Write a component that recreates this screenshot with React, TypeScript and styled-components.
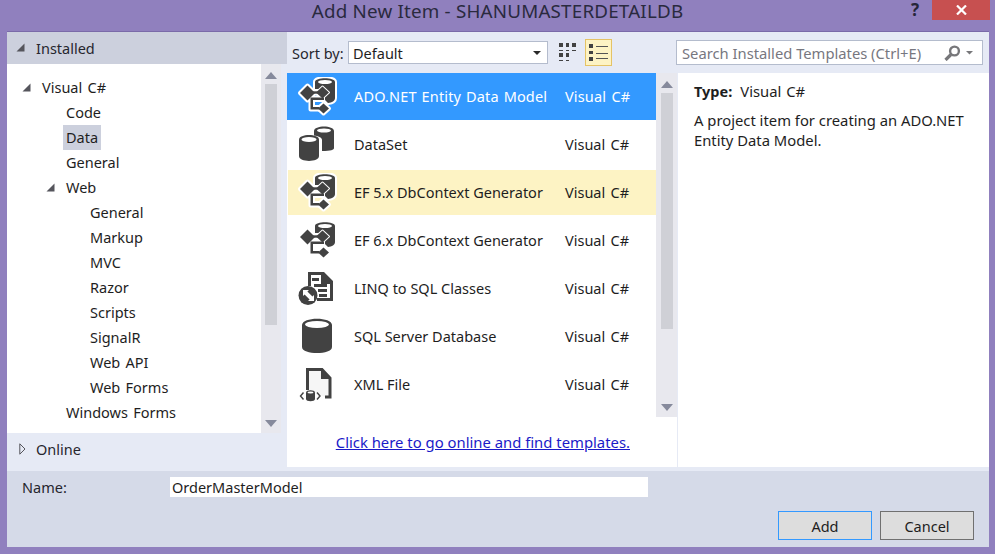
import React from "react";
import styled, { createGlobalStyle } from "styled-components";

const Global = createGlobalStyle`
  html, body { margin: 0; padding: 0; width: 995px; height: 554px; overflow: hidden; background: #9080be; }
  * { box-sizing: border-box; }
`;

const FONT = `"Noto Sans", "Open Sans", "Liberation Sans", sans-serif`;
const INK = "#1e1e1e";

const Win = styled.div`
  width: 995px; height: 554px; background: #9080be; display: flex; flex-direction: column;
  font-family: ${FONT}; font-size: 14.5px; color: ${INK}; overflow: hidden;
`;
const TitleBar = styled.header`
  height: 31px; flex: none; display: grid; grid-template-columns: 1fr auto 1fr; align-items: start;
`;
const TitleText = styled.h1`
  margin: 0; font-size: 18.8px; font-weight: 400; line-height: 23px; color: #2a2a3e; letter-spacing: 0.2px; white-space: nowrap;
`;
const Controls = styled.div`
  display: flex; justify-content: flex-end; align-items: flex-start; padding-right: 5px;
`;
const Help = styled.span`
  width: 22px; font-size: 17px; font-weight: 700; line-height: 20px; text-align: left; color: #26263a; padding-left: 1px;
`;
const Close = styled.span`
  width: 58px; height: 20px; background: #c75050; display: flex; align-items: center; justify-content: center;
`;
const Client = styled.main`
  margin: 0 6px 7px 7px; flex: 1; min-height: 0; display: flex; flex-direction: column;
  border-top: 1px solid #7a6aa8; background: #e6eaf5;
`;
const Top = styled.div`flex: 1; min-height: 0; display: grid; grid-template-columns: 280px 1fr;`;
const Left = styled.aside`display: flex; flex-direction: column; min-height: 0;`;
const SectionHead = styled.div<{ $active?: boolean }>`
  height: ${p => (p.$active ? "32px" : "38px")}; flex: none; display: flex; align-items: center;
  gap: ${p => (p.$active ? "11px" : "10px")}; padding-left: ${p => (p.$active ? "9px" : "12px")};
  padding-bottom: ${p => (p.$active ? "1px" : "6px")};
  background: ${p => (p.$active ? "#ccd0dd" : "transparent")}; color: #26262e;
`;
const TreeWrap = styled.div`flex: 1; min-height: 0; display: grid; grid-template-columns: 254px 20px 6px;`;
const Tree = styled.ul`
  list-style: none; margin: 0; padding: 11px 0 0; background: #fff; display: flex; flex-direction: column;
`;
const Node = styled.li<{ $level: number }>`
  height: 25px; flex: none; display: flex; align-items: center; padding-left: ${p => [15, 56, 80, 39][p.$level]}px; gap: 8px; line-height: 25px;
`;
const Label = styled.span<{ $selected?: boolean }>`
  padding: 0 3px; background: ${p => (p.$selected ? "#ccd0dd" : "transparent")}; color: ${INK}; word-spacing: 1.5px;
`;
const Bar = styled.div`
  background: #e8e8ee; display: flex; flex-direction: column; align-items: center; padding: 8px 0 6px;
`;
const Thumb = styled.div<{ $h: number }>`
  width: 12px; height: ${p => p.$h}px; background: #cfd0d6; margin-top: 5px;
`;
const Spacer = styled.div`flex: 1;`;
const Center = styled.section`display: flex; flex-direction: column; min-width: 0;`;
const Toolbar = styled.div`
  height: 41px; flex: none; display: grid; grid-template-columns: 1fr 313px; align-items: center;
`;
const ToolLeft = styled.div`display: flex; align-items: center; padding-left: 5px;`;
const ToolLabel = styled.span`width: 56px; color: #26262e;`;
const Select = styled.div`
  width: 200px; height: 23px; background: #fff; border: 1px solid #b4bccd; display: flex; align-items: center;
  justify-content: space-between; padding: 0 6px 0 4px; color: ${INK}; margin-right: 10px;
`;
const ViewBtn = styled.span`
  width: 27px; height: 27px; display: flex; align-items: center; justify-content: center; margin-left: 8px;
  background: #fdf3c4; border: 1px solid #e5c365;
`;
const Search = styled.div`
  width: 307px; height: 25px; background: #fff; border: 1px solid #b4bccd; display: flex; align-items: center;
  justify-content: space-between; padding: 0 5px; color: #77777f; font-size: 14.75px;
`;
const Panes = styled.div`flex: 1; min-height: 0; display: grid; grid-template-columns: 369px 21px 1px 1fr; padding-bottom: 4px;`;
const ListCol = styled.div`background: #fff; display: flex; flex-direction: column;`;
const Row = styled.div<{ $state?: "sel" | "hover" }>`
  height: 48px; flex: none; display: grid; grid-template-columns: 67px 211px 1fr; align-items: center; padding-bottom: 2px;
  background: ${p => (p.$state === "sel" ? "#3399ff" : "#fff")};
  ${p => p.$state === "hover" ? "background-image: linear-gradient(#fdf3c4, #fdf3c4); background-size: calc(100% - 1px) 45px; background-position: 1px 1px; background-repeat: no-repeat;" : ""}
  ${p => p.$state === "sel" ? "height: 47px; margin-bottom: 1px; letter-spacing: 0.15px; word-spacing: 1px; padding-bottom: 1px;" : ""}
  color: ${p => (p.$state === "sel" ? "#fff" : INK)};
`;
const IconCell = styled.span`display: flex; justify-content: flex-start; padding: 2px 0 0 10px;`;
const Lang = styled.span`word-spacing: 1.5px;`;
const LinkRow = styled.div`flex: 1; display: flex; justify-content: flex-end; align-items: flex-end; padding: 0 26px 15px 0;`;
const More = styled.a`color: #1a1ac8; text-decoration: underline; line-height: 20px; font-size: 14.85px;`;
const ListScroll = styled.div`background: #fff; display: flex; flex-direction: column;`;
const ListBar = styled(Bar)`height: 344px; flex: none;`;
const Divider = styled.div`background: #e6eaf5;`;
const Info = styled.div`background: #fff; padding: 8px 16px; line-height: 20px; font-size: 14.8px;`;
const InfoType = styled.div`margin-bottom: 9px; word-spacing: 1px;`;
const Strong = styled.b`font-weight: 700; margin-right: 8px; font-size: 14.5px;`;
const Footer = styled.footer`
  height: 76px; flex: none; background: #d5dae8; display: flex; flex-direction: column; padding: 6px 15px 7px 15px;
`;
const NameRow = styled.div`display: flex; align-items: center; height: 20px;`;
const NameLabel = styled.span`width: 148px; color: #26262e;`;
const NameInput = styled.div`
  width: 478px; height: 20px; background: #fff; padding-left: 2px; line-height: 20px; color: ${INK};
`;
const Buttons = styled.div`margin-top: auto; display: flex; justify-content: flex-end; gap: 8px;`;
const Btn = styled.button<{ $primary?: boolean }>`
  width: 94px; height: 29px; padding: 0; background: #dddddd; font: inherit; color: ${INK};
  border: 1px solid ${p => (p.$primary ? "#3399ff" : "#707070")};
`;

const Tri = ({ open }: { open?: boolean }) => open ? (
  <svg width="9" height="9" viewBox="0 0 9 9"><path d="M8.5 0.5V8.5H0.5Z" fill="#55555c" /></svg>
) : (
  <svg width="7" height="12" viewBox="0 0 7 12"><path d="M0.8 0.8L6 6L0.8 11.2Z" fill="none" stroke="#55555c" /></svg>
);
const Up = () => <svg width="12" height="7" viewBox="0 0 12 7"><path d="M6 0L12 7H0Z" fill="#868a9c" /></svg>;
const Down = () => <svg width="12" height="7" viewBox="0 0 12 7"><path d="M6 7L12 0H0Z" fill="#868a9c" /></svg>;
const Caret = () => <svg width="8" height="4" viewBox="0 0 8 4"><path d="M0 0H8L4 4Z" fill="#2a2a2a" /></svg>;

const D = "#424242";

const EntityIcon = () => {
  const cylinder = "M18 5C18 0 38 0 38 5V21C38 24 35 25.5 31 26L25 20V12H18Z";
  const pieces = (
    <>
      <path d="M3 16L10.5 8.5L18 16L10.5 23.5Z" />
      <path d="M19 15.5L25.5 9.5L32 15.5L25.5 21.5Z" />
      <path d="M21 31.5L26.5 26.5L32 31.5L26.5 36.5Z" />
      <path d="M13.5 20.5H27V23H16V30H22V32.5H13.5Z" />
    </>
  );
  return (
    <svg width="40" height="40" viewBox="0 0 40 40">
      <g fill="#fff" stroke="#fff" strokeWidth="4" strokeLinejoin="round">
        <path d={cylinder} />
        {pieces}
      </g>
      <path d={cylinder} fill={D} />
      <g fill="#fff" stroke="#fff" strokeWidth="2" strokeLinejoin="round">{pieces}</g>
      <g fill={D}>{pieces}</g>
      <path d="M16 15.5H21" stroke={D} strokeWidth="2.4" />
      <ellipse cx="28" cy="5" rx="7" ry="2" fill="#fff" />
    </svg>
  );
};
const DataSetIcon = () => (
  <svg width="40" height="40" viewBox="0 0 40 40">
    <path d="M17 6C17 0 37 0 37 6V23C37 25 34 26 25 26V15C25 12.5 21 11 17 10.5Z" fill={D} />
    <ellipse cx="27" cy="5.5" rx="7" ry="2" fill="#fff" />
    <path d="M2 14.5C2 8.5 22 8.5 22 14.5V31C22 37.5 2 37.5 2 31Z" fill={D} />
    <ellipse cx="12" cy="14.5" rx="7.5" ry="2.4" fill="#fff" />
  </svg>
);
const LinqIcon = () => (
  <svg width="40" height="40" viewBox="0 0 40 40">
    <path d="M11 3H27L36 12V32H20V29H33V15H24V6H14V17H11Z" fill={D} />
    <path d="M15 9H22V12H15ZM17 15H30V18H17ZM21 20H30V23H21ZM22 25H30V28H22Z" fill={D} />
    <circle cx="11" cy="26.5" r="9.5" fill={D} />
    <path d="M6 21H12L10.4 22.6L15.4 27.6L17 26V32H11L12.6 30.4L7.6 25.4L6 27Z" fill="#fff" />
  </svg>
);
const SqlIcon = () => (
  <svg width="40" height="40" viewBox="0 0 40 40">
    <path d="M5 8C5 -0.5 35 -0.5 35 8V30C35 38 5 38 5 30Z" fill={D} />
    <ellipse cx="20" cy="7.5" rx="12" ry="3.5" fill="#fff" />
  </svg>
);
const XmlIcon = () => (
  <svg width="40" height="40" viewBox="0 0 40 40">
    <path d="M10.5 25V4.5H25L33 13V32H28" fill="#f6f6f6" stroke={D} strokeWidth="3" />
    <path d="M24 3V14H34Z" fill={D} />
    <path d="M9 27.5C9 24.5 18 24.5 18 27.5V34C18 37 9 37 9 34Z" fill={D} />
    <ellipse cx="13.5" cy="27.5" rx="3" ry="1" fill="#fff" />
    <path d="M6.5 27.5L3.5 31L6.5 34.5M20 27.5L23 31L20 34.5" fill="none" stroke={D} strokeWidth="1.4" />
  </svg>
);
const GridIcon = () => (
  <svg width="19" height="20" viewBox="0 0 19 20" fill="#424242">
    <path d="M1 0h4v4h-4zM8 0h3v4h-3zM14 0h4v4h-4zM1 7h4v1h-4zM8 7h3v1h-3zM14 7h4v1h-4zM1 10h4v4h-4zM8 10h3v4h-3zM1 17h4v1h-4zM8 17h3v1h-3z" />
  </svg>
);
const ListIcon = () => (
  <svg width="19" height="18" viewBox="0 0 19 18">
    <path d="M0 0h4v4h-4zM0 7h4v3h-4zM0 13h4v4h-4z" fill="#424242" />
    <path d="M7 2h12v1h-12zM7 9h12v1h-12zM7 14h12v1h-12z" fill="#555" />
  </svg>
);
const Glass = () => (
  <svg width="34" height="16" viewBox="0 0 34 16">
    <circle cx="11.5" cy="6" r="4.4" fill="none" stroke="#77777a" strokeWidth="2.4" />
    <path d="M8 9.5L2.5 15" stroke="#77777a" strokeWidth="3.2" />
    <path d="M23 6H30L26.5 9.5Z" fill="#77777a" />
  </svg>
);
const CloseX = () => (
  <svg width="11" height="10" viewBox="0 0 11 10"><path d="M1 0.5L10 9.5M10 0.5L1 9.5" stroke="#fff" strokeWidth="2.2" /></svg>
);

const web = ["General", "Markup", "MVC", "Razor", "Scripts", "SignalR", "Web API", "Web Forms"];
const items: { name: string; icon: React.ReactNode; state?: "sel" | "hover" }[] = [
  { name: "ADO.NET Entity Data Model", icon: <EntityIcon />, state: "sel" },
  { name: "DataSet", icon: <DataSetIcon /> },
  { name: "EF 5.x DbContext Generator", icon: <EntityIcon />, state: "hover" },
  { name: "EF 6.x DbContext Generator", icon: <EntityIcon /> },
  { name: "LINQ to SQL Classes", icon: <LinqIcon /> },
  { name: "SQL Server Database", icon: <SqlIcon /> },
  { name: "XML File", icon: <XmlIcon /> },
];

export default function App() {
  return (
    <Win>
      <Global />
      <TitleBar>
        <span />
        <TitleText>Add New Item - SHANUMASTERDETAILDB</TitleText>
        <Controls>
          <Help>?</Help>
          <Close><CloseX /></Close>
        </Controls>
      </TitleBar>
      <Client>
        <Top>
          <Left>
            <SectionHead $active><Tri open /><span>Installed</span></SectionHead>
            <TreeWrap>
              <Tree>
                <Node $level={0}><Tri open /><Label>Visual C#</Label></Node>
                <Node $level={1}><Label>Code</Label></Node>
                <Node $level={1}><Label $selected>Data</Label></Node>
                <Node $level={1}><Label>General</Label></Node>
                <Node $level={3}><Tri open /><Label>Web</Label></Node>
                {web.map(t => <Node key={t} $level={2}><Label>{t}</Label></Node>)}
                <Node $level={1}><Label>Windows Forms</Label></Node>
              </Tree>
              <Bar><Up /><Thumb $h={241} /><Spacer /><Down /></Bar>
              <span />
            </TreeWrap>
            <SectionHead><Tri /><span>Online</span></SectionHead>
          </Left>
          <Center>
            <Toolbar>
              <ToolLeft>
                <ToolLabel>Sort by:</ToolLabel>
                <Select><span>Default</span><Caret /></Select>
                <GridIcon />
                <ViewBtn><ListIcon /></ViewBtn>
              </ToolLeft>
              <Search><span>Search Installed Templates (Ctrl+E)</span><Glass /></Search>
            </Toolbar>
            <Panes>
              <ListCol>
                {items.map(it => (
                  <Row key={it.name} $state={it.state}>
                    <IconCell>{it.icon}</IconCell>
                    <span>{it.name}</span>
                    <Lang>Visual C#</Lang>
                  </Row>
                ))}
                <LinkRow><More href="#">Click here to go online and find templates.</More></LinkRow>
              </ListCol>
              <ListScroll><ListBar><Up /><Thumb $h={236} /><Spacer /><Down /></ListBar></ListScroll>
              <Divider />
              <Info>
                <InfoType><Strong>Type:</Strong>Visual C#</InfoType>
                <div>A project item for creating an ADO.NET<br />Entity Data Model.</div>
              </Info>
            </Panes>
          </Center>
        </Top>
        <Footer>
          <NameRow><NameLabel>Name:</NameLabel><NameInput>OrderMasterModel</NameInput></NameRow>
          <Buttons><Btn $primary>Add</Btn><Btn>Cancel</Btn></Buttons>
        </Footer>
      </Client>
    </Win>
  );
}
